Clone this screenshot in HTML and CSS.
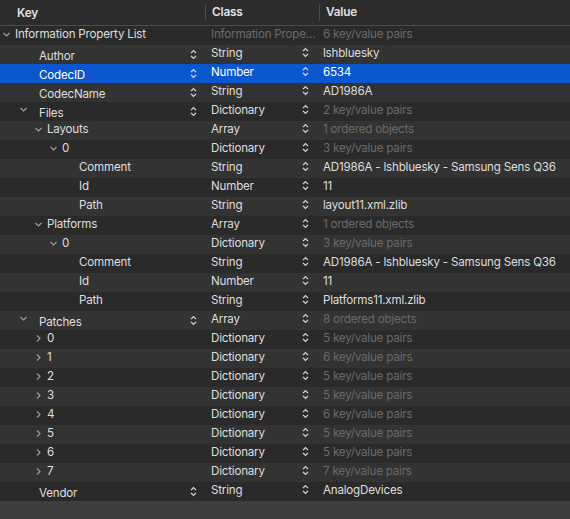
FILE: index.html
```html
<!DOCTYPE html>
<html lang="en">

<head>
    <meta charset="UTF-8">
    <title>Info.plist</title>
    <link rel="stylesheet" href="styles.css">
</head>

<body>
    <div id="editor">
        <div class="head">
            <div class="hcell key">Key</div>
            <div class="hcell sep">Class</div>
            <div class="hcell sep">Value</div>
        </div>

        <div class="rows">
            <div class="row">
                <div class="key lv0"><span class="tw open"></span><span class="txt">Information Property List</span></div>
                <div class="cls"><span class="txt dim">Information Property List</span></div>
                <div class="val dim">6 key/value pairs</div>
            </div>
            <div class="row">
                <div class="key lv1 top"><span class="txt">Author</span><span class="pop"></span></div>
                <div class="cls"><span class="txt">String</span><span class="pop"></span></div>
                <div class="val">lshbluesky</div>
            </div>
            <div class="row sel">
                <div class="key lv1 top"><span class="txt">CodecID</span><span class="pop"></span></div>
                <div class="cls"><span class="txt">Number</span><span class="pop"></span></div>
                <div class="val">6534</div>
            </div>
            <div class="row">
                <div class="key lv1 top"><span class="txt">CodecName</span><span class="pop"></span></div>
                <div class="cls"><span class="txt">String</span><span class="pop"></span></div>
                <div class="val">AD1986A</div>
            </div>
            <div class="row">
                <div class="key lv1 top"><span class="tw open far"></span><span class="txt">Files</span><span class="pop"></span></div>
                <div class="cls"><span class="txt">Dictionary</span><span class="pop"></span></div>
                <div class="val dim">2 key/value pairs</div>
            </div>
            <div class="row">
                <div class="key lv2"><span class="tw open"></span><span class="txt">Layouts</span></div>
                <div class="cls"><span class="txt">Array</span><span class="pop"></span></div>
                <div class="val dim">1 ordered objects</div>
            </div>
            <div class="row">
                <div class="key lv3"><span class="tw open"></span><span class="txt">0</span></div>
                <div class="cls"><span class="txt">Dictionary</span><span class="pop"></span></div>
                <div class="val dim">3 key/value pairs</div>
            </div>
            <div class="row">
                <div class="key lv4"><span class="txt">Comment</span></div>
                <div class="cls"><span class="txt">String</span><span class="pop"></span></div>
                <div class="val">AD1986A - lshbluesky - Samsung Sens Q36</div>
            </div>
            <div class="row">
                <div class="key lv4"><span class="txt">Id</span></div>
                <div class="cls"><span class="txt">Number</span><span class="pop"></span></div>
                <div class="val">11</div>
            </div>
            <div class="row">
                <div class="key lv4"><span class="txt">Path</span></div>
                <div class="cls"><span class="txt">String</span><span class="pop"></span></div>
                <div class="val">layout11.xml.zlib</div>
            </div>
            <div class="row">
                <div class="key lv2"><span class="tw open"></span><span class="txt">Platforms</span></div>
                <div class="cls"><span class="txt">Array</span><span class="pop"></span></div>
                <div class="val dim">1 ordered objects</div>
            </div>
            <div class="row">
                <div class="key lv3"><span class="tw open"></span><span class="txt">0</span></div>
                <div class="cls"><span class="txt">Dictionary</span><span class="pop"></span></div>
                <div class="val dim">3 key/value pairs</div>
            </div>
            <div class="row">
                <div class="key lv4"><span class="txt">Comment</span></div>
                <div class="cls"><span class="txt">String</span><span class="pop"></span></div>
                <div class="val">AD1986A - lshbluesky - Samsung Sens Q36</div>
            </div>
            <div class="row">
                <div class="key lv4"><span class="txt">Id</span></div>
                <div class="cls"><span class="txt">Number</span><span class="pop"></span></div>
                <div class="val">11</div>
            </div>
            <div class="row">
                <div class="key lv4"><span class="txt">Path</span></div>
                <div class="cls"><span class="txt">String</span><span class="pop"></span></div>
                <div class="val">Platforms11.xml.zlib</div>
            </div>
            <div class="row">
                <div class="key lv1 top"><span class="tw open far"></span><span class="txt">Patches</span><span class="pop"></span></div>
                <div class="cls"><span class="txt">Array</span><span class="pop"></span></div>
                <div class="val dim">8 ordered objects</div>
            </div>
            <div class="row">
                <div class="key lv2"><span class="tw"></span><span class="txt">0</span></div>
                <div class="cls"><span class="txt">Dictionary</span><span class="pop"></span></div>
                <div class="val dim">5 key/value pairs</div>
            </div>
            <div class="row">
                <div class="key lv2"><span class="tw"></span><span class="txt">1</span></div>
                <div class="cls"><span class="txt">Dictionary</span><span class="pop"></span></div>
                <div class="val dim">6 key/value pairs</div>
            </div>
            <div class="row">
                <div class="key lv2"><span class="tw"></span><span class="txt">2</span></div>
                <div class="cls"><span class="txt">Dictionary</span><span class="pop"></span></div>
                <div class="val dim">5 key/value pairs</div>
            </div>
            <div class="row">
                <div class="key lv2"><span class="tw"></span><span class="txt">3</span></div>
                <div class="cls"><span class="txt">Dictionary</span><span class="pop"></span></div>
                <div class="val dim">5 key/value pairs</div>
            </div>
            <div class="row">
                <div class="key lv2"><span class="tw"></span><span class="txt">4</span></div>
                <div class="cls"><span class="txt">Dictionary</span><span class="pop"></span></div>
                <div class="val dim">6 key/value pairs</div>
            </div>
            <div class="row">
                <div class="key lv2"><span class="tw"></span><span class="txt">5</span></div>
                <div class="cls"><span class="txt">Dictionary</span><span class="pop"></span></div>
                <div class="val dim">5 key/value pairs</div>
            </div>
            <div class="row">
                <div class="key lv2"><span class="tw"></span><span class="txt">6</span></div>
                <div class="cls"><span class="txt">Dictionary</span><span class="pop"></span></div>
                <div class="val dim">5 key/value pairs</div>
            </div>
            <div class="row">
                <div class="key lv2"><span class="tw"></span><span class="txt">7</span></div>
                <div class="cls"><span class="txt">Dictionary</span><span class="pop"></span></div>
                <div class="val dim">7 key/value pairs</div>
            </div>
            <div class="row">
                <div class="key lv1 top"><span class="txt">Vendor</span><span class="pop"></span></div>
                <div class="cls"><span class="txt">String</span><span class="pop"></span></div>
                <div class="val">AnalogDevices</div>
            </div>
        </div>
        <div class="filler"></div>
    </div>
</body>

</html>
```

FILE: styles.css
```css
html,
body {
    margin: 0;
    height: 100%;
    background: #3e3e3e;
}

#editor {
    display: flex;
    flex-direction: column;
    height: 100%;
    font-family: Inter, "Noto Sans", sans-serif;
    font-size: 11.6px;
    letter-spacing: -0.2px;
    color: #dedede;
}

.head {
    display: grid;
    grid-template-columns: 205px 114px 1fr;
    align-items: center;
    height: 25px;
    background: #2c2c2c;
    border-bottom: 1px solid #4b4b4b;
    font-size: 11.8px;
    font-weight: 600;
    color: #e2e2e2;
}

.hcell.key {
    padding-left: 17px;
}

.hcell.sep {
    padding-left: 6px;
    line-height: 17px;
    border-left: 1px solid #4b4b4b;
}

.row {
    display: grid;
    grid-template-columns: 205px 114px 1fr;
    height: 19px;
    line-height: 17px;
    background: #2a2a2a;
}

.row:nth-child(even) {
    background: #333333;
}

.row.sel {
    background: #0b57d0;
    color: #fff;
}

.key,
.cls {
    display: flex;
    align-items: flex-start;
    min-width: 0;
}

.txt {
    flex: 1;
    min-width: 0;
    white-space: nowrap;
    overflow: hidden;
    text-overflow: ellipsis;
}

.key.top .txt {
    padding-top: 3px;
}

.lv0 { padding-left: 3px; }
.lv1 { padding-left: 39px; }
.lv2 { padding-left: 35px; }
.lv3 { padding-left: 50px; }
.lv4 { padding-left: 79px; }

.key .pop {
    margin-right: 8px;
    margin-top: 4px;
}

.cls {
    padding-left: 6px;
}

.cls .txt {
    padding-right: 2px;
}

.cls .pop {
    margin-left: 3px;
    margin-right: 10px;
    margin-top: 2px;
}

.val {
    padding-left: 4px;
    white-space: nowrap;
    overflow: hidden;
}

.dim {
    color: #6a6a6a;
}

/* disclosure triangles */
.tw {
    width: 7px;
    height: 7px;
    margin-top: 5px;
    margin-right: 5px;
    flex: none;
    background: no-repeat center / 7px 7px;
    background-image: url("data:image/svg+xml,%3Csvg xmlns='http://www.w3.org/2000/svg' viewBox='0 0 7 7'%3E%3Cpath d='M2 0.5 L5 3.5 L2 6.5' fill='none' stroke='%23a0a0a0' stroke-width='1.1'/%3E%3C/svg%3E");
}

.tw.open {
    background-image: url("data:image/svg+xml,%3Csvg xmlns='http://www.w3.org/2000/svg' viewBox='0 0 7 7'%3E%3Cpath d='M0.5 2 L3.5 5 L6.5 2' fill='none' stroke='%23a0a0a0' stroke-width='1.1'/%3E%3C/svg%3E");
}

.tw.far {
    margin-left: -19px;
    margin-right: 12px;
    margin-top: 4px;
}

/* up/down popup arrows */
.pop {
    width: 7px;
    height: 11px;
    flex: none;
    background: no-repeat center / 7px 11px;
    background-image: url("data:image/svg+xml,%3Csvg xmlns='http://www.w3.org/2000/svg' viewBox='0 0 7 11'%3E%3Cpath d='M1 4.2 L3.5 1.6 L6 4.2 M1 6.8 L3.5 9.4 L6 6.8' fill='none' stroke='%23dcdcdc' stroke-width='1.2'/%3E%3C/svg%3E");
}

.filler {
    flex: 1;
}
```
